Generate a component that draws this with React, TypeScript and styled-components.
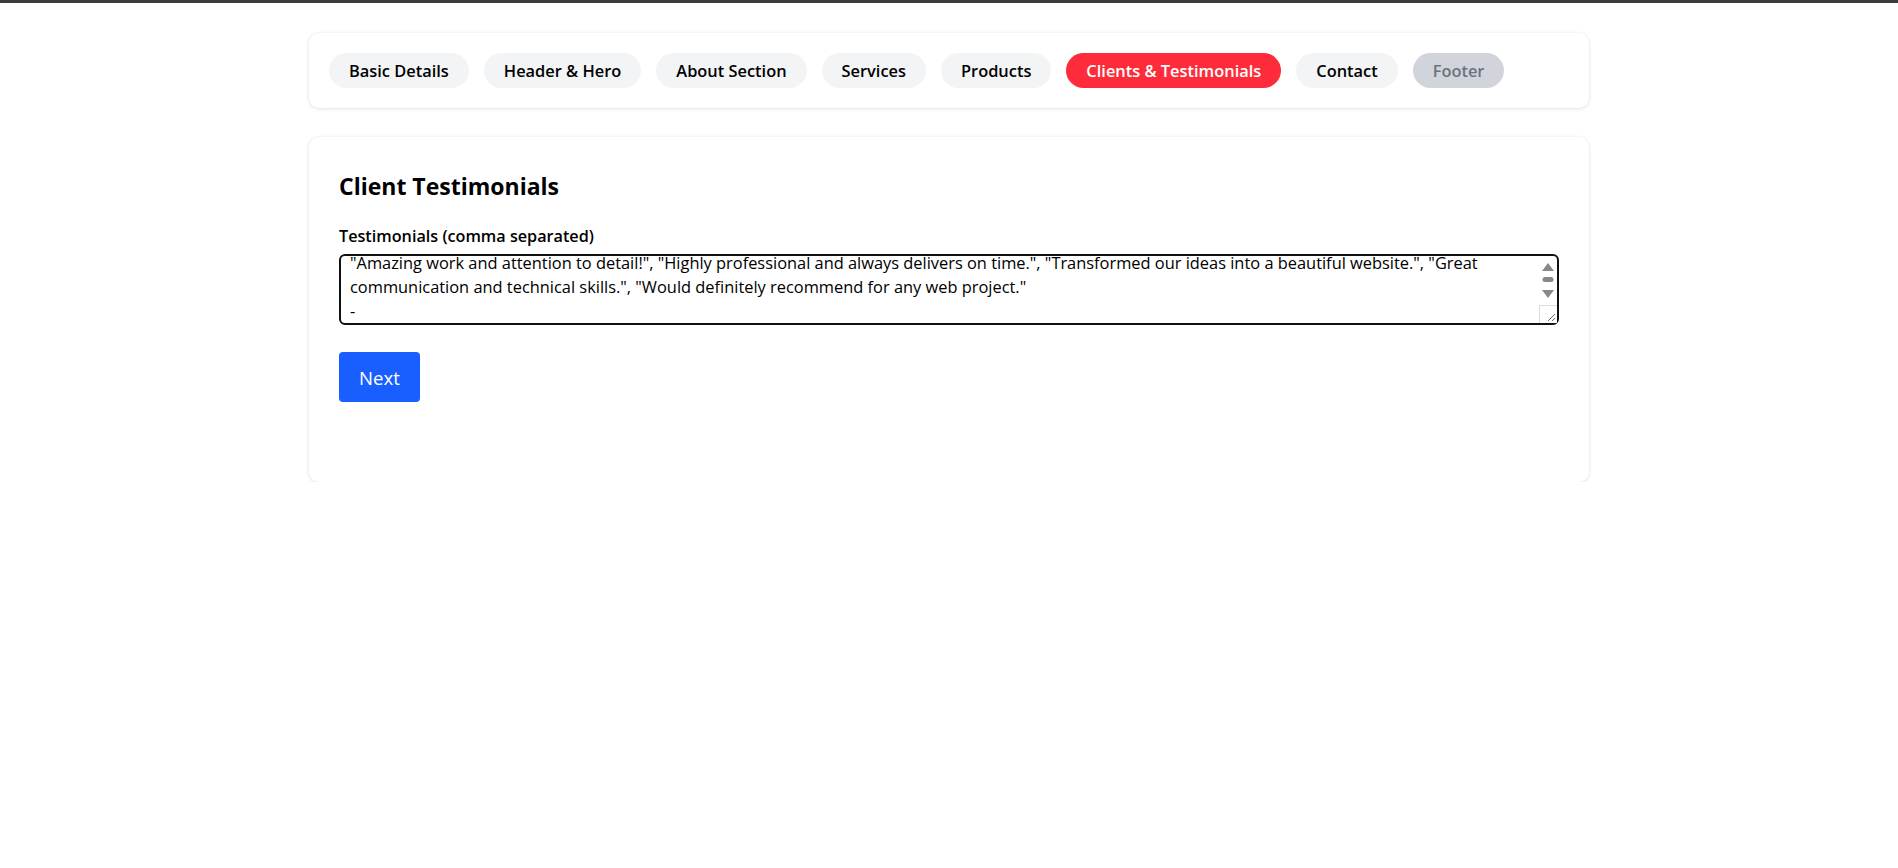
import React, { useEffect, useRef } from "react";
import styled, { createGlobalStyle } from "styled-components";

const GlobalStyle = createGlobalStyle`
  * {
    box-sizing: border-box;
  }
  body {
    margin: 0;
    background: #ffffff;
    font-family: "Open Sans", "Noto Sans", "Liberation Sans", sans-serif;
    color: #000;
  }
`;

const TopBar = styled.div`
  height: 3px;
  background-color: #3c3c3c;
`;

const Page = styled.div`
  max-width: 1280px;
  margin: 0 auto;
  padding-top: 30px;
  display: flex;
  flex-direction: column;
  gap: 29px;
`;

const Card = styled.div`
  background-color: #fff;
  border-radius: 10px;
  box-shadow: 0 1px 4px rgba(0, 0, 0, 0.1), 0 0 0 1px rgba(0, 0, 0, 0.015);
`;

const NavCard = styled(Card)`
  display: flex;
  flex-wrap: wrap;
  gap: 15px;
  padding: 20px;
`;

const Pill = styled.button<{ $active?: boolean; $disabled?: boolean }>`
  height: 35px;
  padding: 0 20px;
  border: none;
  border-radius: 18px;
  font-family: inherit;
  font-size: 16.4px;
  font-weight: 600;
  cursor: pointer;
  background-color: ${(p) =>
    p.$active ? "#fe2b3b" : p.$disabled ? "#d1d5db" : "#f3f4f6"};
  color: ${(p) => (p.$active ? "#fff" : p.$disabled ? "#6b7280" : "#000")};
`;

const FormCard = styled(Card)`
  padding: 33px 30px 80px;
`;

const Title = styled.h2`
  margin: 0 0 24px;
  font-size: 23px;
  font-weight: 700;
  line-height: 32px;
`;

const Label = styled.label`
  display: block;
  font-size: 16.2px;
  font-weight: 600;
  line-height: 20px;
  margin-bottom: 8px;
`;

const AreaWrap = styled.div`
  position: relative;
  margin-bottom: 27px;
`;

const TextArea = styled.textarea`
  display: block;
  width: 100%;
  height: 71px;
  padding: 0 24px 0 9px;
  border: 2px solid #111;
  border-radius: 6px;
  font-family: inherit;
  font-size: 16.4px;
  line-height: 24px;
  color: #000;
  resize: none;
  overflow: hidden;
  outline: none;
`;

const ScrollBar = styled.div`
  position: absolute;
  top: 2px;
  right: 2px;
  bottom: 2px;
  width: 18px;
  pointer-events: none;
`;

const NextButton = styled.button`
  height: 50px;
  padding: 0 20px;
  border: none;
  border-radius: 4px;
  background-color: #195fff;
  color: #fff;
  font-family: inherit;
  font-size: 18.6px;
  cursor: pointer;
`;

const tabs = [
  "Basic Details",
  "Header & Hero",
  "About Section",
  "Services",
  "Products",
  "Clients & Testimonials",
  "Contact",
  "Footer",
];

const testimonials =
  '"Amazing work and attention to detail!", "Highly professional and always delivers on time.", "Transformed our ideas into a beautiful website.", "Great communication and technical skills.", "Would definitely recommend for any web project."\n-';

export default function App() {
  const areaRef = useRef<HTMLTextAreaElement>(null);

  useEffect(() => {
    const el = areaRef.current;
    if (el) {
      el.focus();
      el.setSelectionRange(el.value.length, el.value.length);
      el.scrollTop = el.scrollHeight;
    }
  }, []);

  return (
    <>
      <GlobalStyle />
      <TopBar />
      <Page>
        <NavCard>
          {tabs.map((t) => (
            <Pill
              key={t}
              $active={t === "Clients & Testimonials"}
              $disabled={t === "Footer"}
            >
              {t}
            </Pill>
          ))}
        </NavCard>

        <FormCard>
          <Title>Client Testimonials</Title>
          <Label htmlFor="testimonials">Testimonials (comma separated)</Label>
          <AreaWrap>
            <TextArea
              id="testimonials"
              ref={areaRef}
              defaultValue={testimonials}
            />
            <ScrollBar>
              <svg width="18" height="67" viewBox="0 0 18 67">
                <polygon points="9,7 15,15 3,15" fill="#888" />
                <rect x="3.5" y="21" width="11" height="5" rx="2.5" fill="#888" />
                <polygon points="3,34 15,34 9,42" fill="#888" />
                <rect x="0.5" y="49.5" width="18" height="18" fill="#fff" stroke="#dcdcdc" />
                <line x1="16" y1="58" x2="9" y2="65" stroke="#6e6e6e" strokeWidth="1" />
                <line x1="16" y1="62" x2="13" y2="65" stroke="#6e6e6e" strokeWidth="1" />
              </svg>
            </ScrollBar>
          </AreaWrap>
          <NextButton>Next</NextButton>
        </FormCard>
      </Page>
    </>
  );
}
